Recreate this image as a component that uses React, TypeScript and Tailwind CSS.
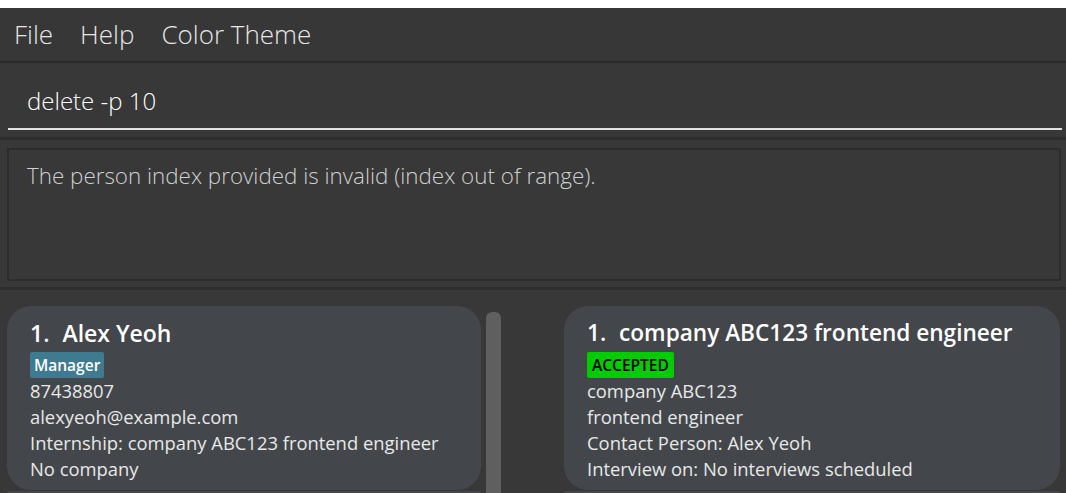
const font = { fontFamily: '"Open Sans", "Noto Sans", sans-serif' };

const PersonCard = () => (
  <div className="w-[474px] h-[184px] shrink-0 rounded-[24px] bg-[#43474b] pl-[23px] pt-[12px] text-[#e8e8e8]">
    <div className="flex items-baseline gap-[13px] text-[23px] font-semibold leading-[30px] text-white">
      <span>1.</span>
      <span>Alex Yeoh</span>
    </div>
    <div className="mt-[4px] inline-block rounded-[2px] bg-[#3e7b91] px-[4px] text-[15.5px] font-semibold leading-[26px] text-white">
      Manager
    </div>
    <div className="text-[18.4px] leading-[26px]">
      <div>87438807</div>
      <div>alexyeoh@example.com</div>
      <div>Internship: company ABC123 frontend engineer</div>
      <div>No company</div>
    </div>
  </div>
);

const InternshipCard = () => (
  <div className="w-[496px] h-[184px] shrink-0 rounded-[24px] bg-[#43474b] pl-[23px] pt-[12px] text-[#e8e8e8]">
    <div className="flex items-baseline gap-[13px] text-[22.6px] font-semibold leading-[30px] text-white">
      <span>1.</span>
      <span>company ABC123 frontend engineer</span>
    </div>
    <div className="mt-[4px] inline-block rounded-[2px] bg-[#00cc00] px-[5px] text-[15.5px] font-semibold leading-[26px] text-black">
      ACCEPTED
    </div>
    <div className="text-[18.4px] leading-[26px]">
      <div>company ABC123</div>
      <div>frontend engineer</div>
      <div>Contact Person: Alex Yeoh</div>
      <div>Interview on: No interviews scheduled</div>
    </div>
  </div>
);

export default function App() {
  return (
    <div className="w-[1066px] h-[493px] overflow-hidden bg-white" style={font}>
      <div className="mt-[8px] flex h-[485px] flex-col bg-[#383838]">
        {/* menu bar */}
        <div className="flex h-[55px] shrink-0 items-center gap-[27px] border-b-2 border-[#2b2b2b] bg-[#373737] pl-[14px] text-[26px] font-light text-[#e6e6e6]">
          <span>File</span>
          <span>Help</span>
          <span>Color Theme</span>
        </div>

        {/* command box */}
        <div className="h-[77px] shrink-0 border-b-[3px] border-[#2e2e2e] pl-[8px] pr-[4px] pt-[23px]">
          <div className="border-b-2 border-[#e0e0e0] pb-[12px] pl-[19px] text-[24px] font-light leading-[30px] text-white">
            delete -p 10
          </div>
        </div>

        {/* result display */}
        <div className="h-[150px] shrink-0 border-b-[3px] border-[#2e2e2e] pl-[7px] pr-[5px] pt-[8px]">
          <div className="h-[133px] border-2 border-[#2c2c2c] pl-[18px] pt-[11px] text-[22.4px] font-light leading-[30px] text-[#cfcfcf]">
            The person index provided is invalid (index out of range).
          </div>
        </div>

        {/* lists */}
        <div className="flex flex-1 overflow-hidden pt-[16px]">
          <div className="flex flex-col gap-[1px] pl-[7px]">
            <PersonCard />
            <div className="h-[40px] w-[474px] rounded-t-[24px] bg-[#43474b]" />
          </div>
          <div className="ml-[5px] mt-[6px] h-[200px] w-[15px] rounded-t-[6px] bg-[#5f5f5f]" />
          <div className="ml-[63px] flex flex-col gap-[1px]">
            <InternshipCard />
            <div className="h-[40px] w-[496px] rounded-t-[24px] bg-[#43474b]" />
          </div>
        </div>
      </div>
    </div>
  );
}
